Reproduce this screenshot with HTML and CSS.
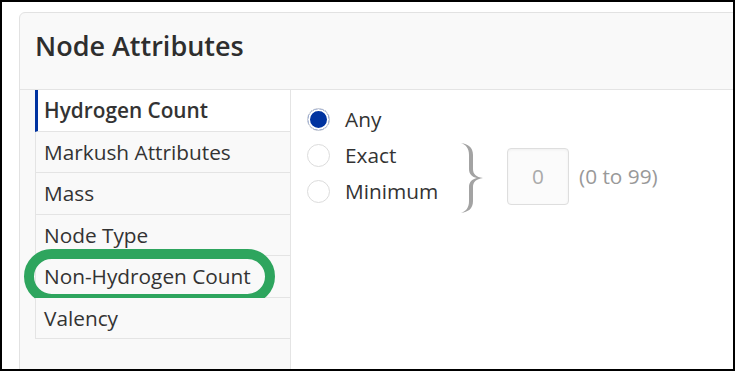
FILE: index.html
```html
<!DOCTYPE html>
<html lang="en">
<head>
    <meta charset="UTF-8">
    <meta name="viewport" content="width=device-width, initial-scale=1.0">
    <title>Node Attributes</title>
    <link rel="stylesheet" href="styles.css">
</head>
<body>
    <div class="frame">
        <div class="panel">
            <div class="panel-header">
                <h2>Node Attributes</h2>
            </div>
            <div class="panel-body">
                <ul class="nav">
                    <li class="nav-item active">Hydrogen Count</li>
                    <li class="nav-item">Markush Attributes</li>
                    <li class="nav-item">Mass</li>
                    <li class="nav-item">Node Type</li>
                    <li class="nav-item">Non-Hydrogen Count<span class="highlight"></span></li>
                    <li class="nav-item">Valency</li>
                </ul>
                <div class="content">
                    <label class="option"><span class="radio checked"></span>Any</label>
                    <div class="range">
                        <div class="choices">
                            <label class="option"><span class="radio"></span>Exact</label>
                            <label class="option"><span class="radio"></span>Minimum</label>
                        </div>
                        <svg class="brace" width="24" height="70" viewBox="0 0 24 70">
                            <path d="M1,0 C8,1 13,4 13,12 L13,26 C13,31 16,34 23,35 C16,36 13,39 13,44 L13,58 C13,66 8,69 1,70 C6,68 9,65 9,58 L9,44 C9,39 12,36 17,35 C12,34 9,31 9,26 L9,12 C9,5 6,2 1,0 Z" fill="#a3a3a3"/>
                        </svg>
                        <div class="count">0</div>
                        <span class="hint">(0 to 99)</span>
                    </div>
                </div>
            </div>
        </div>
    </div>
</body>
</html>
```

FILE: styles.css
```css
html, body {
    margin: 0;
    padding: 0;
}
body {
    font-family: "Open Sans", Arial, sans-serif;
    color: #333;
    background: #fff;
}
.frame {
    box-sizing: border-box;
    width: 735px;
    height: 371px;
    border: 2px solid #000;
    padding: 10px 0 0 17px;
    overflow: hidden;
}
.panel {
    width: 760px;
    height: 420px;
    background: #f9f9f9;
    border: 1px solid #e2e2e2;
    border-radius: 6px;
}
.panel-header {
    box-sizing: border-box;
    height: 77px;
    padding: 15px 0 0 15px;
    border-bottom: 1px solid #e4e4e4;
}
.panel-header h2 {
    margin: 0;
    font-size: 27px;
    font-weight: 600;
    line-height: 36px;
    color: #2e2e2e;
}
.panel-body {
    display: flex;
    height: 100%;
    padding-left: 15px;
}
.nav {
    list-style: none;
    margin: 0;
    padding: 0;
    width: 255px;
}
.nav-item {
    position: relative;
    box-sizing: border-box;
    height: 41.5px;
    line-height: 40px;
    padding-left: 8px;
    font-size: 20.8px;
    border-left: 1px solid #e4e4e4;
    border-bottom: 1px solid #e4e4e4;
    background: #f9f9f9;
}
.nav-item.active {
    background: #fff;
    font-weight: 600;
    border-left: 3px solid #0033a0;
    padding-left: 6px;
}
.highlight {
    position: absolute;
    left: -12px;
    top: -7px;
    box-sizing: border-box;
    width: 251px;
    height: 55px;
    border: 10px solid #2ea55e;
    border-radius: 28px;
}
.content {
    flex: 1;
    background: #fff;
    border-left: 1px solid #e4e4e4;
    padding: 11px 0 0 16px;
}
.option {
    display: flex;
    align-items: center;
    height: 36px;
    font-size: 20.8px;
}
.radio {
    box-sizing: border-box;
    width: 23px;
    height: 23px;
    margin-right: 15px;
    border: 1px solid #dcdcdc;
    border-radius: 50%;
    background: #fff;
}
.radio.checked {
    background: #0033a0;
    box-shadow: inset 0 0 0 2px #fff;
}
.range {
    display: flex;
    align-items: flex-start;
}
.choices {
    width: 153px;
}
.brace {
    margin-top: 6px;
}
.count {
    box-sizing: border-box;
    width: 62px;
    height: 57px;
    margin: 11px 0 0 23px;
    border: 1px solid #dedede;
    border-radius: 4px;
    background: #fbfbfb;
    box-shadow: inset 0 1px 3px rgba(0, 0, 0, 0.05);
    text-align: center;
    line-height: 55px;
    font-size: 20.8px;
    color: #aaa;
}
.hint {
    margin: 25px 0 0 10px;
    line-height: 28px;
    font-size: 20.8px;
    color: #999;
}
```
